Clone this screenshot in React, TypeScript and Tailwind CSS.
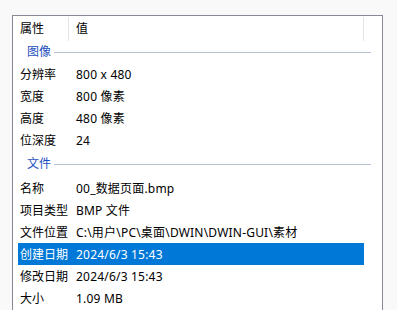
import React from "react";

const font = { fontFamily: '"Noto Sans", "Noto Sans CJK SC", sans-serif' };

type Row = { k: string; v: string; sel?: boolean };

const img: Row[] = [
  { k: "分辨率", v: "800 x 480" },
  { k: "宽度", v: "800 像素" },
  { k: "高度", v: "480 像素" },
  { k: "位深度", v: "24" },
];

const file: Row[] = [
  { k: "名称", v: "00_数据页面.bmp" },
  { k: "项目类型", v: "BMP 文件" },
  { k: "文件位置", v: "C:\\用户\\PC\\桌面\\DWIN\\DWIN-GUI\\素材" },
  { k: "创建日期", v: "2024/6/3 15:43", sel: true },
  { k: "修改日期", v: "2024/6/3 15:43" },
  { k: "大小", v: "1.09 MB" },
];

function DataRow({ r }: { r: Row }) {
  return (
    <div
      className={`flex items-center h-[22px] w-[346px] whitespace-nowrap pt-px ${
        r.sel ? "bg-[#0078d7] text-white" : "text-black"
      }`}
    >
      <div className="w-[50px] pl-[2px] shrink-0">{r.k}</div>
      <div className="pl-[8px] tracking-[0.2px]">{r.v}</div>
    </div>
  );
}

function Group({ title, h }: { title: string; h: string }) {
  return (
    <div className={`flex items-center w-[353px] ${h}`}>
      <span className="pl-[9px] text-[#1e4fc0] whitespace-nowrap">{title}</span>
      <div className="flex-1 ml-[3px] h-px bg-[#b7bfd3]" />
    </div>
  );
}

export default function App() {
  return (
    <div
      className="w-[397px] h-[310px] bg-[#f9f9f9] pt-[15px] pl-[12px] overflow-hidden text-[12px] leading-none"
      style={font}
    >
      <div className="w-[371px] h-[295px] bg-white border-l border-t border-r border-[#878a94] pl-[5px] pt-px">
        <div className="flex items-center h-[24px] w-[346px]">
          <div className="w-[50px] pl-[2px] shrink-0">属性</div>
          <div className="w-px h-full bg-[#e3e3e3]" />
          <div className="flex-1 pl-[7px]">值</div>
          <div className="w-px h-full bg-[#e3e3e3]" />
        </div>
        <Group title="图像" h="h-[22px]" />
        {img.map((r) => (
          <DataRow key={r.k} r={r} />
        ))}
        <Group title="文件" h="h-[26px]" />
        {file.map((r) => (
          <DataRow key={r.k} r={r} />
        ))}
      </div>
    </div>
  );
}
